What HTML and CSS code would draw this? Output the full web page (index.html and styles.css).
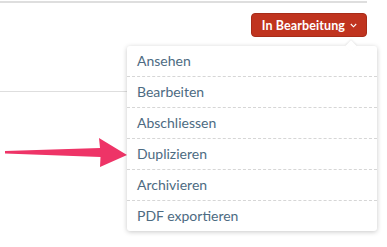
FILE: index.html
```html
<!DOCTYPE html>
<html lang="de">
<head>
<meta charset="utf-8">
<link rel="stylesheet" href="styles.css">
</head>
<body>
<div class="page">
  <div class="rule-top"></div>
  <div class="header">
    <div class="status">
      <button class="status-btn">In Bearbeitung
        <svg class="chev" width="7" height="5" viewBox="0 0 7 5"><path d="M0.8 1 L3.5 3.8 L6.2 1" fill="none" stroke="#fff" stroke-width="1.1"/></svg>
      </button>
      <ul class="menu">
        <li>Ansehen</li>
        <li>Bearbeiten</li>
        <li>Abschliessen</li>
        <li>Duplizieren</li>
        <li>Archivieren</li>
        <li>PDF exportieren</li>
      </ul>
    </div>
  </div>
  <div class="rule-mid"></div>
  <svg class="pointer" width="130" height="40" viewBox="0 0 130 40">
    <path d="M5 21 L100 18 L99 8 L127 25 L100 37 L100.5 27 L5 23.5 Z" fill="#ee3467"/>
  </svg>
</div>
</body>
</html>
```
FILE: styles.css
```css
html, body { margin: 0; padding: 0; background: #fff; }
.page { position: relative; width: 387px; height: 247px; overflow: hidden; font-family: Lato, "Open Sans", sans-serif; }
.rule-top { height: 2px; margin-top: 1px; width: 367px; background: #dedede; }
.header { display: flex; justify-content: flex-end; padding: 10px 20px 0 0; }
.status { position: relative; }
.status-btn {
  display: flex; align-items: center; gap: 5px;
  height: 24px; padding: 0 9px 0 10px; margin: 0;
  background: #c0341f; color: #fff; border: 1px solid #a72c19; border-radius: 4px;
  font-family: Lato, "Open Sans", sans-serif; font-size: 12.5px; font-weight: 700; letter-spacing: 0.1px;
}
.chev { margin-top: 1px; }
.rule-mid { height: 1px; width: 367px; background: #dedede; margin-top: 54px; }
.menu {
  position: absolute; top: 33px; right: -10px; width: 250px; margin: 0; padding: 0; list-style: none;
  background: #fff; border-radius: 3px;
  box-shadow: 0 1px 5px rgba(0,0,0,0.22);
  z-index: 2;
}
.menu::before {
  content: ""; position: absolute; top: -4px; right: 22px; width: 8px; height: 8px;
  background: #fff; transform: rotate(45deg);
  box-shadow: -1px -1px 2px rgba(0,0,0,0.08);
}
.menu li {
  position: relative; height: 30px; line-height: 29px; padding-left: 10px;
  font-size: 14px; color: #4d6b82; border-bottom: 1px dashed #d6d6d6;
}
.menu li:last-child { border-bottom: none; }
.pointer { position: absolute; left: 0; top: 130px; }
```
